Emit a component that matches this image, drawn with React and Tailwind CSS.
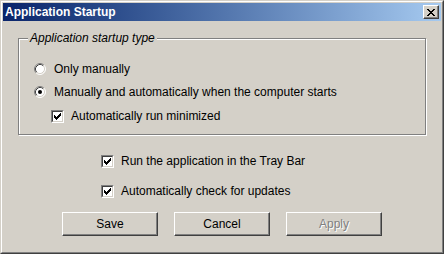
import React from "react";

const font = { fontFamily: '"Liberation Sans", Arial, sans-serif' };

function Radio({ checked }) {
  return (
    <svg width="12" height="12" viewBox="0 0 12 12" className="shrink-0">
      <circle cx="6" cy="6" r="5" fill="#ffffff" />
      <path d="M2.11 9.89 A5.5 5.5 0 0 1 9.89 2.11" fill="none" stroke="#808080" strokeWidth="1" />
      <path d="M9.89 2.11 A5.5 5.5 0 0 1 2.11 9.89" fill="none" stroke="#ffffff" strokeWidth="1" />
      <path d="M2.82 9.18 A4.5 4.5 0 0 1 9.18 2.82" fill="none" stroke="#404040" strokeWidth="1" />
      <path d="M9.18 2.82 A4.5 4.5 0 0 1 2.82 9.18" fill="none" stroke="#d4d0c8" strokeWidth="1" />
      {checked && <circle cx="6" cy="6" r="2" fill="#000000" />}
    </svg>
  );
}

function Check({ checked }) {
  return (
    <div className="w-[13px] h-[13px] shrink-0 border border-t-[#808080] border-l-[#808080] border-r-white border-b-white">
      <div className="w-full h-full bg-white border border-t-[#404040] border-l-[#404040] border-r-[#d4d0c8] border-b-[#d4d0c8] flex items-center justify-center">
        {checked && (
          <svg width="7" height="7" viewBox="0 0 7 7">
            <path d="M0 2h1v1h1v1h1v-1h1v-1h1v-1h1v-1h1v3h-1v1h-1v1h-1v1h-1v1h-1v-1h-1v-1h-1z" fill="#000" />
          </svg>
        )}
      </div>
    </div>
  );
}

function Button({ label, disabled }) {
  return (
    <div className="w-[96px] h-[24px] border border-t-white border-l-white border-r-[#404040] border-b-[#404040] shadow-[inset_-1px_-1px_0_#808080] flex items-center justify-center text-[12px]">
      <span
        className={disabled ? "text-[#808080] [text-shadow:1px_1px_0_#ffffff]" : "text-black"}
      >
        {label}
      </span>
    </div>
  );
}

export default function App() {
  return (
    <div className="w-[444px] h-[254px] bg-[#d4d0c8] border border-t-[#d4d0c8] border-l-[#d4d0c8] border-r-[#404040] border-b-[#404040]" style={font}>
      <div className="w-full h-full border border-t-white border-l-white border-r-[#808080] border-b-[#808080] p-px flex flex-col">
        {/* title bar */}
        <div className="h-[18px] bg-gradient-to-r from-[#0a246a] to-[#a6caf0] flex items-center justify-between pl-[2px] pr-[2px]">
          <span className="text-white font-bold text-[12px] leading-none">Application Startup</span>
          <div className="w-[16px] h-[14px] bg-[#d4d0c8] border border-t-white border-l-white border-r-[#404040] border-b-[#404040] shadow-[inset_-1px_-1px_0_#808080] flex items-center justify-center">
            <svg width="8" height="7" viewBox="0 0 8 7">
              <path d="M0 0h2v1h1v1h2v-1h1v-1h2v1h-1v1h-1v1h-1v1h1v1h1v1h1v1h-2v-1h-1v-1h-2v1h-1v1h-2v-1h1v-1h1v-1h1v-1h-1v-1h-1v-1h-1z" fill="#000" />
            </svg>
          </div>
        </div>

        {/* group box */}
        <div className="relative ml-[15px] mr-[15px] mt-[17px] h-[97px] border border-[#808080] shadow-[1px_1px_0_#ffffff,inset_1px_1px_0_#ffffff] pl-[15px] pt-[18px] text-[12px] text-black">
          <span className="absolute left-[9px] top-[-8px] bg-[#d4d0c8] px-[2px] italic leading-[14px]">
            Application startup type
          </span>
          <div className="h-[23px] flex items-center gap-[8px]">
            <Radio />
            <span>Only manually</span>
          </div>
          <div className="h-[23px] flex items-center gap-[8px]">
            <Radio checked />
            <span>Manually and automatically when the computer starts</span>
          </div>
          <div className="h-[26px] flex items-center gap-[7px] pl-[17px]">
            <Check checked />
            <span>Automatically run minimized</span>
          </div>
        </div>

        <div className="mt-[16px] pl-[98px] text-[12px] text-black flex flex-col gap-[10px]">
          <div className="h-[20px] flex items-center gap-[7px]">
            <Check checked />
            <span>Run the application in the Tray Bar</span>
          </div>
          <div className="h-[20px] flex items-center gap-[7px]">
            <Check checked />
            <span>Automatically check for updates</span>
          </div>
        </div>

        <div className="mt-[11px] pl-[59px] flex gap-[16px]">
          <Button label="Save" />
          <Button label="Cancel" />
          <Button label="Apply" disabled />
        </div>
      </div>
    </div>
  );
}
